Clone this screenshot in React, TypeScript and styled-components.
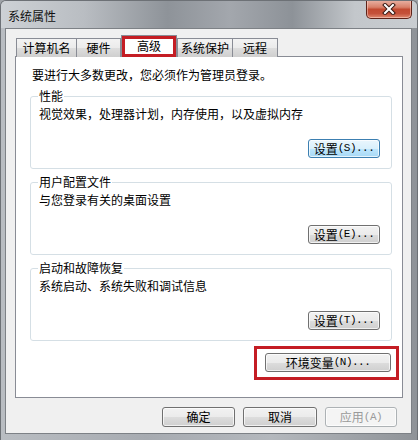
import React from "react";
import styled, { createGlobalStyle, css } from "styled-components";

const Global = createGlobalStyle`
  html, body { margin: 0; padding: 0; background: #9fa3a8; }
  * { box-sizing: border-box; }
`;

const FONT = `"Noto Sans CJK SC", "Noto Sans", "DejaVu Sans", sans-serif`;

const Window = styled.div`
  width: 418px;
  height: 440px;
  display: flex;
  flex-direction: column;
  border-radius: 6px 6px 0 0;
  border: 1px solid #6d7176;
  border-bottom: none;
  background: linear-gradient(90deg, #b9bdc2 0%, #a7abb1 35%, #b4b8bd 65%, #8f9398 100%);
  font-family: ${FONT};
  font-size: 12px;
  color: #000;
  overflow: hidden;
`;

const TitleBar = styled.div`
  height: 27px;
  display: flex;
  justify-content: space-between;
  align-items: flex-start;
  padding: 0 5px 0 7px;
  background: linear-gradient(90deg, #cdd1d5 0%, #b9bdc2 20%, #8e9399 40%, #a3a7ad 55%, #8d9298 70%, #c3c7cb 85%, #c9cdd1 100%);
`;

const Title = styled.div`
  margin-top: 8px;
  line-height: 14px;
  font-size: 12px;
  color: #111;
`;

const CloseButton = styled.div`
  width: 46px;
  height: 19px;
  margin-top: -1px;
  border: 1px solid #5e2218;
  border-top: none;
  border-radius: 0 0 5px 5px;
  background: linear-gradient(#eab4a6 0%, #d8806a 40%, #c24a31 52%, #c5513a 75%, #df8a70 100%);
  display: flex;
  align-items: center;
  justify-content: center;
  box-shadow: inset 0 0 0 1px rgba(255, 220, 210, 0.5);
`;

const Client = styled.div`
  flex: 1;
  margin: 0 5px 6px 4px;
  border: 1px solid #7d8186;
  background: #f0f0f0;
  display: flex;
  flex-direction: column;
  padding: 7px 8px 5px 9px;
`;

const TabStrip = styled.div`
  display: flex;
  align-items: flex-end;
  height: 21px;
  margin-left: 1px;
  margin-bottom: -1px;
  position: relative;
  z-index: 1;
`;

const Tab = styled.div<{ $w: number; $active?: boolean }>`
  width: ${(p) => p.$w}px;
  height: 19px;
  margin-right: -1px;
  border: 1px solid #898c95;
  border-bottom: none;
  background: linear-gradient(#f3f3f3 0%, #ebebeb 50%, #dddddd 51%, #cfcfcf 100%);
  line-height: 18px;
  text-align: center;
  white-space: nowrap;
  ${(p) =>
    p.$active &&
    css`
      height: 22px;
      background: #fff;
      margin-left: 1px;
      margin-right: 0;
      line-height: 20px;
      box-shadow: inset 0 0 0 3px #c41d24;
    `}
`;

const Panel = styled.div`
  background: #fff;
  border: 1px solid #898c95;
  height: 342px;
  padding: 10px 3px 18px 14px;
  display: flex;
  flex-direction: column;
`;

const Notice = styled.div`
  line-height: 16px;
  margin-left: 2px;
`;

const Group = styled.fieldset`
  margin: 5px 7px 0 0;
  padding: 0 11px 10px 7px;
  border: 1px solid #d5dfe5;
  border-radius: 3px;
  display: flex;
  flex-direction: column;
  min-width: 0;
`;

const Legend = styled.legend`
  padding: 0 1px;
  line-height: 16px;
`;

const Desc = styled.div`
  line-height: 16px;
  margin-top: 2px;
  padding-left: 1px;
`;

const ButtonRow = styled.div<{ $mt?: number }>`
  display: flex;
  justify-content: flex-end;
  margin-top: ${(p) => p.$mt ?? 0}px;
`;

const Button = styled.div<{ $w: number; $h?: number; $focus?: boolean; $disabled?: boolean }>`
  width: ${(p) => p.$w}px;
  height: ${(p) => p.$h ?? 19}px;
  border: 1px solid #707070;
  border-radius: 3px;
  background: linear-gradient(#f2f2f2 0%, #ebebeb 50%, #dddddd 51%, #cfcfcf 100%);
  box-shadow: inset 0 0 0 1px rgba(255, 255, 255, 0.7);
  display: flex;
  align-items: center;
  justify-content: center;
  line-height: 1;
  white-space: nowrap;
  ${(p) =>
    p.$focus &&
    css`
      border-color: #3c7fb1;
      background: linear-gradient(#eaf6fd 0%, #d9f0fc 50%, #bee6fd 51%, #a7d9f5 100%);
    `}
  ${(p) =>
    p.$disabled &&
    css`
      border-color: #adb2b5;
      background: #f4f4f4;
      color: #9a9a9a;
    `}
`;

const Mn = styled.span`
  font-family: "Liberation Mono", "DejaVu Sans Mono", monospace;
  font-size: 11px;
  letter-spacing: -0.5px;
`;

const Callout = styled.div`
  align-self: flex-end;
  margin-top: 5px;
  border: 3px solid #c41d24;
  padding: 4px 5px 5px 8px;
`;

const Footer = styled.div`
  display: flex;
  justify-content: flex-end;
  gap: 8px;
  margin-top: 9px;
  padding-right: 6px;
`;

const Label = ({ cn, key2 }: { cn: string; key2?: string }) => (
  <>
    {cn}
    {key2 && <Mn>({key2})...</Mn>}
  </>
);

const tabs: { t: string; w: number; active?: boolean }[] = [
  { t: "计算机名", w: 61 },
  { t: "硬件", w: 45 },
  { t: "高级", w: 56, active: true },
  { t: "系统保护", w: 56 },
  { t: "远程", w: 46 },
];

const groups = [
  { legend: "性能", desc: "视觉效果，处理器计划，内存使用，以及虚拟内存", key2: "S", focus: true },
  { legend: "用户配置文件", desc: "与您登录有关的桌面设置", key2: "E" },
  { legend: "启动和故障恢复", desc: "系统启动、系统失败和调试信息", key2: "T" },
];

export default function App() {
  return (
    <>
      <Global />
      <Window>
        <TitleBar>
          <Title>系统属性</Title>
          <CloseButton>
            <svg width="14" height="12" viewBox="0 0 14 12">
              <path d="M3 2 L11 10 M11 2 L3 10" stroke="#3a1a14" strokeWidth="4" strokeLinecap="square" />
              <path d="M3 2 L11 10 M11 2 L3 10" stroke="#fff" strokeWidth="2" strokeLinecap="square" />
            </svg>
          </CloseButton>
        </TitleBar>
        <Client>
          <TabStrip>
            {tabs.map((t) => (
              <Tab key={t.t} $w={t.w} $active={t.active}>
                {t.t}
              </Tab>
            ))}
          </TabStrip>
          <Panel>
            <Notice>要进行大多数更改，您必须作为管理员登录。</Notice>
            {groups.map((g) => (
              <Group key={g.legend}>
                <Legend>{g.legend}</Legend>
                <Desc>{g.desc}</Desc>
                <ButtonRow $mt={17}>
                  <Button $w={72} $focus={g.focus}>
                    <Label cn="设置" key2={g.key2} />
                  </Button>
                </ButtonRow>
              </Group>
            ))}
            <Callout>
              <Button $w={126}>
                <Label cn="环境变量" key2="N" />
              </Button>
            </Callout>
          </Panel>
          <Footer>
            <Button $w={73} $h={20}>确定</Button>
            <Button $w={74} $h={20}>取消</Button>
            <Button $w={72} $h={20} $disabled>
              应用<Mn>(A)</Mn>
            </Button>
          </Footer>
        </Client>
      </Window>
    </>
  );
}
